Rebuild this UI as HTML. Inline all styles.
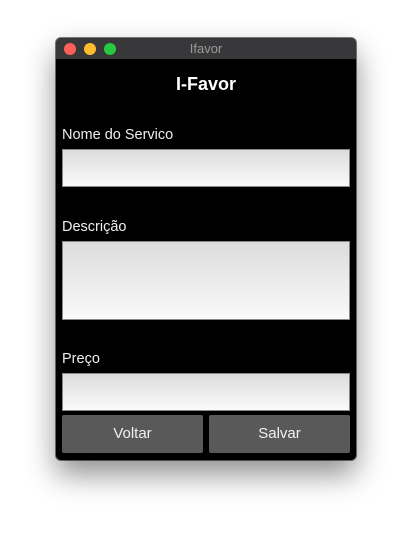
<!DOCTYPE html>
<html><head><style>
body{margin:0;width:412px;height:534px;background:#fff;position:relative;overflow:hidden;font-family:"Liberation Sans",sans-serif}
.win{position:absolute;left:56px;top:38px;width:300px;height:422px;background:#000;border-radius:5px;box-shadow:0 14px 30px rgba(0,0,0,.45),0 0 0 1px rgba(0,0,0,.5);overflow:hidden}
.tb{height:21px;background:#38383a;position:relative;color:#9a9a9a;font-size:13px;text-align:center;line-height:21px}
.d{position:absolute;top:5px;width:12px;height:12px;border-radius:50%}
.lbl{position:absolute;left:6px;color:#eee;font-size:14.5px}
.in{position:absolute;left:6px;width:286px;border:1px solid #888;background:linear-gradient(#dcdcdc,#fafafa)}
.btn{position:absolute;top:377px;height:38px;background:#595959;border-radius:2px;color:#f0f0f0;font-size:15px;text-align:center;line-height:38px}
</style></head><body>
<div class="win">
<div class="tb"><span class="d" style="left:8px;background:#fe5f57"></span><span class="d" style="left:28px;background:#febc2e"></span><span class="d" style="left:48px;background:#28c840"></span>Ifavor</div>
<div style="position:absolute;top:36px;width:100%;text-align:center;color:#fff;font-weight:bold;font-size:18px">I-Favor</div>
<div class="lbl" style="top:89px">Nome do Servico</div>
<div class="in" style="top:111px;height:36px"></div>
<div class="lbl" style="top:181px">Descrição</div>
<div class="in" style="top:203px;height:77px"></div>
<div class="lbl" style="top:313px">Preço</div>
<div class="in" style="top:335px;height:36px"></div>
<div class="btn" style="left:6px;width:141px">Voltar</div>
<div class="btn" style="left:153px;width:141px">Salvar</div>
</div>
</body></html>
